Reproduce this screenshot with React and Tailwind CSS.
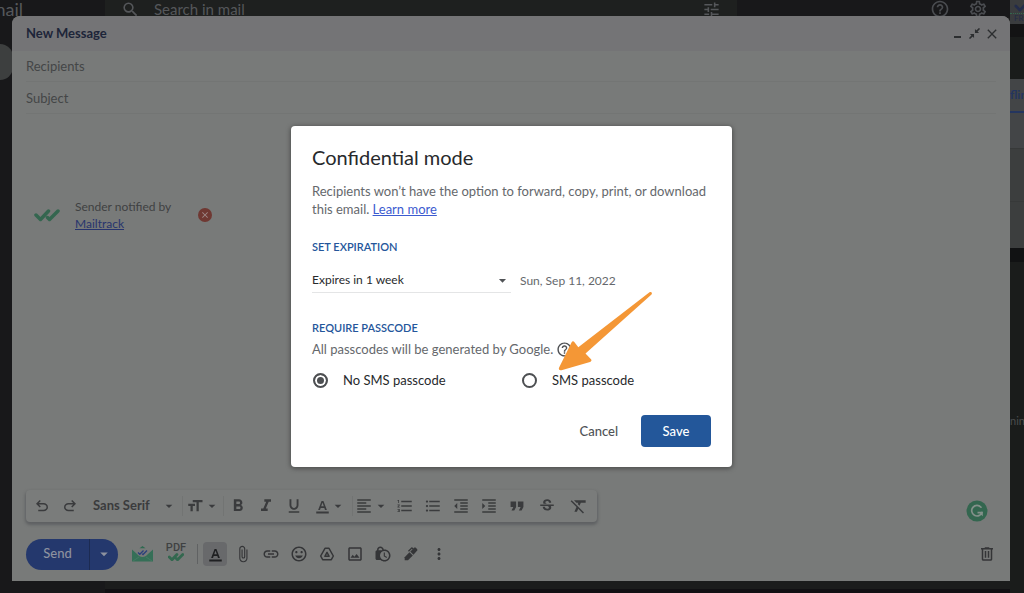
import React from "react";
import {
  MdSearch,
  MdTune,
  MdHelpOutline,
  MdOutlineSettings,
  MdClose,
  MdArrowDropDown,
  MdFormatSize,
  MdFormatBold,
  MdFormatItalic,
  MdFormatUnderlined,
  MdFormatAlignLeft,
  MdFormatListNumbered,
  MdFormatListBulleted,
  MdFormatIndentDecrease,
  MdFormatIndentIncrease,
  MdFormatQuote,
  MdStrikethroughS,
  MdFormatClear,
  MdAttachFile,
  MdLink,
  MdOutlineInsertEmoticon,
  MdOutlineImage,
  MdLockClock,
  MdMoreVert,
} from "react-icons/md";

function UndoIcon({ className }) {
  return (
    <svg viewBox="0 -960 960 960" fill="currentColor" className={className} aria-hidden="true">
      <path d="M280-200v-80h284q63 0 109.500-40T720-420q0-60-46.500-100T564-560H312l104 104-56 56-200-200 200-200 56 56-104 104h252q97 0 166.500 63T800-420q0 94-69.500 157T564-200H280Z" />
    </svg>
  );
}

function TextColorIcon({ className }) {
  return (
    <svg viewBox="0 0 24 24" fill="currentColor" className={className} aria-hidden="true">
      <path d="M2 20h20v3H2zM5 17.500h3l1.100-3.300h5.800l1.100 3.300h3L13.500 3h-3L5 17.500zm4.900-5.800 2-5.900h.2l2 5.900H9.900z" />
    </svg>
  );
}

function DoubleCheck({ className, width = 3 }) {
  return (
    <svg
      viewBox="0 0 26 13"
      fill="none"
      stroke="currentColor"
      strokeWidth={width}
      strokeLinecap="round"
      strokeLinejoin="round"
      className={className}
      aria-hidden="true"
    >
      <path d="M2 6.500 6.500 11 14.500 2.500M13.500 9l2 2L24 2.500" />
    </svg>
  );
}

function MailtrackIcon() {
  return (
    <svg viewBox="0 0 21 16" className="h-4 w-[21px]" aria-hidden="true">
      <path d="M7.500 2.200 10.500 0l3 2.200z" fill="#2f6a50" />
      <path d="M0 3.500 5 8c3 4 8 4 11 0l5-4.500V15.500H0z" fill="#356f57" />
      <path
        d="m6 6.500 1.800 1.800L11.500 4.500M10.200 7.800l.8.700L15 4.500"
        fill="none"
        stroke="#2b3f7c"
        strokeWidth="1.300"
      />
      <path d="M1 15 7 11M20 15l-6-4" stroke="#4d7f6a" strokeWidth=".6" />
    </svg>
  );
}

function DriveIcon({ className }) {
  return (
    <svg
      viewBox="0 0 24 24"
      fill="none"
      stroke="currentColor"
      strokeWidth="2.200"
      strokeLinejoin="round"
      className={className}
      aria-hidden="true"
    >
      <path d="M9 3.500h6L21.500 15l-3 5.500h-13l-3-5.500z" />
      <path d="M12 9.500 8.800 15.500h6.400z" />
    </svg>
  );
}

function PenIcon({ className }) {
  return (
    <svg viewBox="0 0 24 24" fill="currentColor" className={className} aria-hidden="true">
      <path d="M2.500 21.500V17L9.700 9.300l5 5L7.500 21.500z" />
      <path d="m10.900 8.300 3.400-3.100-1-1-4.400 4.300-1.400-1.400 5-5c.5-.5 1.200-.5 1.700 0l1.500 1.500.8-.8c.8-.8 2-.8 2.800 0l1.700 1.700c.8.800.8 2 0 2.800l-5.300 5.800z" />
    </svg>
  );
}

function TrashIcon({ className }) {
  return (
    <svg viewBox="0 0 24 24" fill="currentColor" className={className} aria-hidden="true">
      <path d="M15 4V3H9v1H4v2h1v13c0 1.100.9 2 2 2h10c1.100 0 2-.9 2-2V6h1V4h-5zm2 15H7V6h10v13zM9 8h2v9H9zm4 0h2v9h-2z" />
    </svg>
  );
}

function CollapseIcon({ className }) {
  return (
    <svg viewBox="0 0 12 12" className={className} aria-hidden="true">
      <path
        d="M11.500.5 8 4M.5 11.500 4 8"
        fill="none"
        stroke="currentColor"
        strokeWidth="1.700"
      />
      <path d="M6.500 1v4.500H11zM1 6.500h4.500V11z" fill="currentColor" />
    </svg>
  );
}

function GrammarlyIcon() {
  return (
    <svg viewBox="0 0 22 22" className="size-[22px]" aria-hidden="true">
      <circle cx="11" cy="11" r="10.500" fill="#33664f" />
      <path
        d="M15 7.200A5.300 5.300 0 1 0 16 12.500"
        fill="none"
        stroke="#83908a"
        strokeWidth="1.700"
        strokeLinecap="round"
      />
      <path d="M11.500 11.700h5.300v4.500l-1.700-1.500-1-1.300h-2.600z" fill="#83908a" />
    </svg>
  );
}

function Tool({ label, children, width = "w-7" }) {
  return (
    <button
      type="button"
      aria-label={label}
      className={`flex h-8 shrink-0 items-center justify-center ${width}`}
    >
      {children}
    </button>
  );
}

function Divider() {
  return <span className="h-5 w-px shrink-0 bg-[#727473]" />;
}

const icon = "size-[18px] shrink-0";
const caret = "size-4 shrink-0";

function FormatBar() {
  return (
    <div
      role="toolbar"
      aria-label="Formatting"
      className="flex h-8 w-[571px] items-center rounded-sm bg-[#7a7c7b] pr-1 pl-0.5 text-[#3a3b3d] shadow-[0_2px_3px_1px_#5f6163]"
    >
      <Tool label="Undo"><UndoIcon className={icon} /></Tool>
      <Tool label="Redo"><UndoIcon className="size-[18px] -scale-x-100" /></Tool>
      <span className="ml-1"><Divider /></span>
      <button type="button" className="flex h-8 w-[94px] shrink-0 items-center justify-between pr-[5px] pl-[5px] text-[13px] font-bold">
        Sans Serif
        <MdArrowDropDown className={caret} />
      </button>
      <Divider />
      <Tool label="Size" width="w-10">
        <MdFormatSize className={icon} />
        <MdArrowDropDown className={caret} />
      </Tool>
      <Divider />
      <Tool label="Bold"><MdFormatBold className="size-5" /></Tool>
      <Tool label="Italic"><MdFormatItalic className="size-5" /></Tool>
      <Tool label="Underline"><MdFormatUnderlined className={icon} /></Tool>
      <Tool label="Text color" width="w-11">
        <TextColorIcon className="size-[15px]" />
        <MdArrowDropDown className={caret} />
      </Tool>
      <Divider />
      <Tool label="Align" width="w-[38px]">
        <MdFormatAlignLeft className={icon} />
        <MdArrowDropDown className={caret} />
      </Tool>
      <Tool label="Numbered list"><MdFormatListNumbered className={icon} /></Tool>
      <Tool label="Bulleted list"><MdFormatListBulleted className={icon} /></Tool>
      <Tool label="Indent less"><MdFormatIndentDecrease className={icon} /></Tool>
      <Tool label="Indent more"><MdFormatIndentIncrease className={icon} /></Tool>
      <Tool label="Quote"><MdFormatQuote className="size-[22px]" /></Tool>
      <span className="mx-px"><Divider /></span>
      <Tool label="Strikethrough"><MdStrikethroughS className={icon} /></Tool>
      <span className="mx-0.5"><Divider /></span>
      <Tool label="Remove formatting"><MdFormatClear className="size-5" /></Tool>
    </div>
  );
}

function ActionBar() {
  return (
    <div className="flex items-center text-[#343537]">
      <div className="flex h-[31px] w-[92px] shrink-0 overflow-hidden rounded-full bg-[#24386d] text-[#8d929f]">
        <button type="button" className="h-full w-16 border-r border-[#1c2b52] text-[13px] font-medium">
          Send
        </button>
        <button type="button" aria-label="More send options" className="flex flex-1 items-center justify-center">
          <MdArrowDropDown className="size-[18px]" />
        </button>
      </div>
      <button type="button" aria-label="Mailtrack" className="ml-[14px]"><MailtrackIcon /></button>
      <button type="button" className="ml-3 flex w-[22px] flex-col items-center pb-1 font-['Roboto',sans-serif] text-[11px] leading-[10px] font-medium text-[#3f4142]">
        PDF
        <DoubleCheck className="h-2 w-4 text-[#33684f]" width={4.500} />
      </button>
      <span className="mr-[5px] ml-2.5 h-5 w-px bg-[#606263]" />
      <button type="button" aria-label="Formatting options" className="mr-0.5 flex size-6 items-center justify-center rounded-sm bg-[#68696b] text-[#1f2022]">
        <TextColorIcon className="size-[15px]" />
      </button>
      <Tool label="Attach files"><MdAttachFile className={icon} /></Tool>
      <Tool label="Insert link"><MdLink className={icon} /></Tool>
      <Tool label="Insert emoji"><MdOutlineInsertEmoticon className={icon} /></Tool>
      <Tool label="Insert from Drive"><DriveIcon className="size-4" /></Tool>
      <Tool label="Insert photo"><MdOutlineImage className={icon} /></Tool>
      <Tool label="Confidential mode"><MdLockClock className={icon} /></Tool>
      <Tool label="Insert signature"><PenIcon className="size-4" /></Tool>
      <Tool label="More options"><MdMoreVert className={icon} /></Tool>
      <span className="flex-1" />
      <Tool label="Discard draft"><TrashIcon className={icon} /></Tool>
    </div>
  );
}

function ComposeWindow() {
  return (
    <section
      aria-label="New Message"
      className="absolute top-4 right-[14px] bottom-3 left-3 flex flex-col rounded-t-lg bg-[#787a79]"
    >
      <header className="flex h-[35px] shrink-0 items-center rounded-t-lg bg-[#747476] pr-2.5 pl-[14px]">
        <h1 className="flex-1 text-[13px] font-bold text-[#1d2539]">New Message</h1>
        <div className="flex items-center gap-1 text-[#2c2e30]">
          <button type="button" aria-label="Minimize" className="mr-1 flex h-3 items-end pb-0.5">
            <span className="h-0.5 w-[7px] bg-current" />
          </button>
          <button type="button" aria-label="Exit full screen"><CollapseIcon className="size-[11px]" /></button>
          <button type="button" aria-label="Close"><MdClose className="size-4" /></button>
        </div>
      </header>
      <div className="flex flex-1 flex-col px-[14px]">
        <input
          aria-label="Recipients"
          placeholder="Recipients"
          className="h-[31px] border-b border-[#737574] bg-transparent text-[13px] text-[#3d3f40] outline-none placeholder:text-[#444647]"
        />
        <input
          aria-label="Subject"
          placeholder="Subject"
          className="h-8 border-b border-[#737574] bg-transparent text-[13px] text-[#3d3f40] outline-none placeholder:text-[#444647]"
        />
        <div className="flex flex-1 flex-col pt-[84px]">
          <div className="flex items-center pl-2">
            <DoubleCheck className="h-[14px] w-[26px] text-[#34664f]" width={3.500} />
            <p className="ml-[15px] w-[123px] text-[12px] leading-[17px] text-[#3f4142]">
              Sender notified by <a href="#mailtrack" className="block text-[#27346d] underline">Mailtrack</a>
            </p>
            <button type="button" aria-label="Remove signature" className="flex size-[14px] items-center justify-center rounded-full bg-[#6f3832] text-[#a08c8a]">
              <MdClose className="size-[10px]" />
            </button>
          </div>
        </div>
        <div className="flex items-end justify-between pr-2">
          <FormatBar />
          <button type="button" aria-label="Grammarly"><GrammarlyIcon /></button>
        </div>
        <div className="-mr-[5px] pt-4 pb-[11px]">
          <ActionBar />
        </div>
      </div>
    </section>
  );
}

function Inbox() {
  return (
    <div className="absolute inset-0 flex overflow-hidden bg-[#18181a]">
      <div className="flex w-[105px] shrink-0 flex-col">
        <div className="flex h-[18px] w-[23px] items-center justify-end overflow-hidden text-[18px] leading-[18px] text-[#55575a]">
          mail
        </div>
        <div className="mt-[26px] h-9 w-[13px] rounded-r-full bg-[#3d3f3f]" />
      </div>
      <div className="flex min-w-0 flex-1 flex-col">
        <div className="flex h-[18px] shrink-0">
          <div className="flex w-[632px] items-center bg-[#1e201f] pr-4 pl-4 text-[#55575a]">
            <MdSearch className="size-[19px]" />
            <span className="ml-3.5 flex-1 text-[15px] leading-[18px]">Search in mail</span>
            <MdTune className="size-[19px]" />
          </div>
          <div className="flex flex-1 items-center justify-end gap-[18px] pr-[22px] text-[#4a4c50]">
            <MdHelpOutline className="size-5" />
            <MdOutlineSettings className="size-5" />
          </div>
        </div>
        <div className="flex-1 bg-[#1b1c1c]" />
        <div className="h-1 bg-[#111013]" />
      </div>
      <aside className="flex w-[14px] shrink-0 flex-col overflow-hidden bg-[#1a1c1b]">
        <div className="flex h-6 shrink-0 flex-col bg-[#3a3c3e]">
          <DoubleCheck className="ml-1 h-3 w-6 text-[#232c4a]" />
          <span className="mt-px border-t border-dotted border-[#33684f] pl-1 text-[8px] leading-[9px] text-[#222b46]">FR</span>
        </div>
        <div className="h-[13px] shrink-0 bg-[#131314]" />
        <div className="h-[42px] shrink-0" />
        <div className="flex h-[34px] shrink-0 items-center border-b-2 border-[#24355f] bg-[#434547] text-[12px] font-bold text-[#24355f]">
          flin
        </div>
        <div className="flex h-[135px] shrink-0 flex-col bg-[#3c3e3e]">
          <div className="h-9 border-b border-[#373939] bg-[#434547]" />
          <div className="h-[53px] border-b border-[#373939]" />
        </div>
        <div className="h-[14px] shrink-0 bg-[#111213]" />
        <div className="flex-1 pt-[151px] text-[11px] leading-[16px] text-[#4a4c4d]">nin</div>
      </aside>
    </div>
  );
}

function PasscodeOption({ id, label, checked }) {
  return (
    <div className="flex w-[209px] shrink-0 items-center gap-[15px]">
      <input
        id={id}
        type="radio"
        name="passcode"
        defaultChecked={checked}
        className="m-0 size-[15px] appearance-none rounded-full border-2 border-[#4d4f52] bg-white checked:bg-[#4d4f52] checked:shadow-[inset_0_0_0_2px_#fff]"
      />
      <label htmlFor={id} className="text-[13px] leading-[18px] text-[#27292c]">{label}</label>
    </div>
  );
}

function PointerArrow() {
  return (
    <svg viewBox="0 0 96 80" className="pointer-events-none absolute top-[165px] left-[266px] h-20 w-24" aria-hidden="true">
      <path
        d="M92.500 1.200c1.800-1 3.200.8 2 2.200L28.500 62.500l5.500 5.800c1 1.100.4 2.300-1 2.700L4.500 79.200C2.500 79.800 1.300 78.500 2 76.800L14.500 51.500c.6-1.300 2-1.600 2.800-.4l4 5.200z"
        fill="#f49736"
      />
    </svg>
  );
}

function ConfidentialDialog() {
  return (
    <div className="absolute inset-0 flex items-center justify-center pr-px">
      <div
        role="dialog"
        aria-labelledby="dialog-title"
        className="relative w-[441px] rounded-sm bg-white px-[21px] pt-[17px] pb-5 text-[13px] leading-[18px] text-[#65686c] shadow-[0_1px_4px_1px_#505251]"
      >
        <h2 id="dialog-title" className="text-[20px] leading-7 text-[#27292c]">Confidential mode</h2>
        <p className="mt-[11px]">
          Recipients won’t have the option to forward, copy, print, or download this email.{" "}
          <a href="#learn-more" className="text-[#3c5bd0] underline">Learn more</a>
        </p>
        <h3 className="mt-5 text-[11px] font-semibold text-[#24569b]">SET EXPIRATION</h3>
        <div className="mt-3 flex items-center gap-[9px]">
          <div className="relative w-[199px]">
            <select
              aria-label="Set expiration"
              className="block h-[25px] w-full appearance-none border-b border-[#e4e5e6] bg-white text-[12px] text-[#27292c] outline-none"
            >
              <option>Expires in 1 week</option>
            </select>
            <MdArrowDropDown className="pointer-events-none absolute top-1 right-0 size-[17px] text-[#505356]" />
          </div>
          <span className="text-[12px]">Sun, Sep 11, 2022</span>
        </div>
        <h3 className="mt-[26px] text-[11px] font-semibold text-[#24569b]">REQUIRE PASSCODE</h3>
        <div className="mt-[3px] flex items-center gap-[3px]">
          <span>All passcodes will be generated by Google.</span>
          <MdHelpOutline className="size-[17px] text-[#4d4f52]" />
        </div>
        <div className="mt-[13px] flex pl-px">
          <PasscodeOption id="no-sms" label="No SMS passcode" checked />
          <PasscodeOption id="sms" label="SMS passcode" />
        </div>
        <div className="mt-[26px] flex justify-end gap-[3px] font-medium">
          <button type="button" className="h-8 px-5 text-[#505356]">Cancel</button>
          <button type="button" className="h-8 w-[70px] rounded-sm bg-[#23579a] text-white">Save</button>
        </div>
        <PointerArrow />
      </div>
    </div>
  );
}

export default function App() {
  return (
    <main className="relative min-h-screen overflow-hidden font-['Lato','Open_Sans',sans-serif]">
      <Inbox />
      <ComposeWindow />
      <ConfidentialDialog />
    </main>
  );
}
